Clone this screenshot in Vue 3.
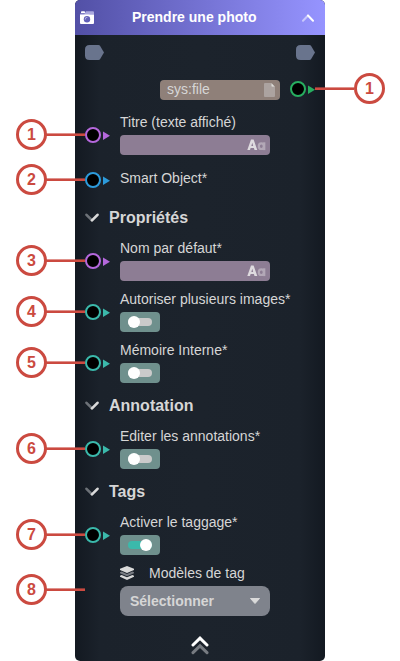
<script setup>
const groups = [
  {
    title: '',
    fields: [
      { label: 'Titre (texte affiché)', kind: 'text', color: '#b568dc', mark: 1 },
      { label: 'Smart Object*', kind: 'object', color: '#2d9bdb', mark: 2 },
    ],
  },
  {
    title: 'Propriétés',
    fields: [
      { label: 'Nom par défaut*', kind: 'text', color: '#b568dc', mark: 3 },
      { label: 'Autoriser plusieurs images*', kind: 'toggle', color: '#3bb9ab', mark: 4 },
      { label: 'Mémoire Interne*', kind: 'toggle', color: '#3bb9ab', mark: 5 },
    ],
  },
  {
    title: 'Annotation',
    fields: [{ label: 'Editer les annotations*', kind: 'toggle', color: '#3bb9ab', mark: 6 }],
  },
  {
    title: 'Tags',
    fields: [{ label: 'Activer le taggage*', kind: 'toggle', on: true, color: '#3bb9ab', mark: 7 }],
  },
]
</script>

<template>
  <main class="page">
    <article class="node">
      <header class="head">
        <svg class="camera" width="14" height="13" viewBox="0 0 14 13">
          <path d="M1 1.2Q1 .3 1.8.3H4.3Q5 .3 5 1.2V2H1Z" fill="#fff" />
          <path d="M0 4.5V3.4Q0 2.4 1 2.4H4.5L6 .3H13Q14 .3 14 1.3V4.5Z" fill="#aaa8de" />
          <path d="M0 3.8H4L5 3.4H9L10 3.8H14V12Q14 13 13 13H1Q0 13 0 12Z" fill="#fff" />
          <circle cx="7" cy="8.2" r="3.2" fill="#6260b8" />
          <path d="M5.2 8.6A2 2 0 0 1 7.4 6.4" fill="none" stroke="#b5b3e2" stroke-width="1" />
        </svg>
        <h1>Prendre une photo</h1>
        <svg class="fold" width="12" height="8" viewBox="0 0 12 8">
          <path d="M1 6.7L6 1.5" stroke="#c9c8fb" stroke-width="2" stroke-linecap="round" />
          <path d="M6 1.5L11 6.7" stroke="#fff" stroke-width="2" stroke-linecap="round" />
        </svg>
      </header>

      <div class="flow">
        <svg v-for="n in 2" :key="n" width="19" height="15" viewBox="0 0 19 15">
          <path d="M4.5 0H13.5Q14.5 0 15 .8L19 7.5L15 14.2Q14.5 15 13.5 15H4.5Q0 15 0 10.5V4.5Q0 0 4.5 0Z" fill="#69748d" />
        </svg>
      </div>

      <div class="output">
        <div class="file">
          <span>sys:file</span>
          <svg width="11" height="14" viewBox="0 0 11 14">
            <path d="M1 0H7V4H11V13Q11 14 10 14H1Q0 14 0 13V1Q0 0 1 0Z" fill="#aca3a0" />
            <path d="M7.3 0L11 3.7H7.3Z" fill="#deddda" />
          </svg>
        </div>
        <svg class="out-port" width="26" height="16" viewBox="0 0 26 16">
          <circle cx="8" cy="8" r="7" fill="#000" stroke="#27ae60" stroke-width="2" />
          <path d="M18 4.5L25 8.7L18 12.9Z" fill="#27ae60" />
        </svg>
        <div class="callout right"><i></i><b>1</b></div>
      </div>

      <section v-for="group in groups" :key="group.title">
        <h2 v-if="group.title">
          <svg width="14" height="9" viewBox="0 0 14 9">
            <path d="M1.5 1.8L6.8 7.2" stroke="#6d7278" stroke-width="2.6" stroke-linecap="round" />
            <path d="M7 7.4L12.5 1.8" stroke="#dadada" stroke-width="2.6" stroke-linecap="round" />
          </svg>
          {{ group.title }}
        </h2>
        <div v-for="field in group.fields" :key="field.mark" class="field" :class="field.kind">
          <svg class="port" width="25" height="16" viewBox="0 0 25 16">
            <circle cx="8" cy="8" r="7" fill="#000" :stroke="field.color" stroke-width="2" />
            <path d="M18 4.5L25 8.7L18 12.9Z" :fill="field.color" />
          </svg>
          <div class="body">
            <label>{{ field.label }}</label>
            <div v-if="field.kind === 'text'" class="input">
              <svg width="19" height="12" viewBox="0 0 19 12">
                <path fill-rule="evenodd" d="M.3 11L4 .5H6.6L10.3 11H7.5L6.9 9H3.6L3 11ZM4.3 6.9H6.2L5.3 3.8Z" fill="#dedbdf" />
                <ellipse cx="14.3" cy="7.2" rx="2.5" ry="2.8" fill="none" stroke="#b3a8b7" stroke-width="2.2" />
                <path d="M17.2 3.3V11.1" stroke="#b3a8b7" stroke-width="2.3" />
              </svg>
            </div>
            <div v-if="field.kind === 'toggle'" class="switch" :class="{ on: field.on }">
              <span><i></i></span>
            </div>
          </div>
          <div class="callout"><b>{{ field.mark }}</b><i></i></div>
        </div>
      </section>

      <div class="field models">
        <div class="body">
          <label>
            <svg width="14" height="14" viewBox="0 0 14 14">
              <path d="M0 9.8L1.6 9.1L7 11.3L12.4 9.1L14 9.8V10.8L7 14L0 10.8Z" fill="#dadada" />
              <path d="M0 6.3L1.6 5.6L7 8L12.4 5.6L14 6.3V7.3L7 10.3L0 7.3Z" fill="#777b82" />
              <path d="M7 0L14 2.8V4L7 7L0 4V2.8Z" fill="#dadada" />
            </svg>
            Modèles de tag
          </label>
          <div class="select">
            Sélectionner
            <svg width="10" height="6" viewBox="0 0 10 6">
              <path d="M.5 .5H9.5L5 5.5Z" fill="#dadada" stroke="#dadada" stroke-linejoin="round" />
            </svg>
          </div>
        </div>
        <div class="callout"><b>8</b><i></i></div>
      </div>

      <footer>
        <svg width="18" height="19" viewBox="0 0 18 19">
          <path d="M2 16.7L9 9.9L16 16.7" fill="none" stroke="#777b81" stroke-width="3" stroke-linecap="round" />
          <path d="M2 9L9 2.2L16 9" fill="none" stroke="#fff" stroke-width="3" stroke-linecap="round" />
        </svg>
      </footer>
    </article>
  </main>
</template>

<style>
body {
  margin: 0;
  background: #fff;
}
</style>

<style scoped>
* {
  box-sizing: border-box;
}
svg {
  display: block;
  flex: none;
}
.page {
  height: 661px;
  padding: 0 75px;
  font: 14px 'Liberation Sans', sans-serif;
  color: #d6d6d6;
}
.node {
  display: flex;
  flex-direction: column;
  height: 661px;
  border-radius: 5px;
  background: linear-gradient(90deg, #131921, #1b222b 10%, #1c232c 50%, #1b222b 90%, #131921);
}
.head {
  display: flex;
  align-items: center;
  height: 35px;
  padding: 0 11px 0 5px;
  border-radius: 5px 5px 0 0;
  background: linear-gradient(90deg, #5250a6, #9694ff);
}
h1 {
  flex: 1;
  margin: 0;
  padding-left: 38px;
  font-size: 14px;
  line-height: 35px;
  color: #fff;
}
.flow {
  display: flex;
  justify-content: space-between;
  height: 35px;
  padding: 10px;
}
.output {
  position: relative;
  display: flex;
  gap: 10px;
  height: 39px;
  padding: 10px 0 0 85px;
}
.file {
  display: flex;
  align-items: center;
  justify-content: space-between;
  width: 120px;
  height: 20px;
  padding: 0 5px 0 7px;
  border-radius: 4px;
  background: #8f8079;
  line-height: 18px;
}
.file span {
  height: 20px;
}
.out-port {
  margin-top: 1px;
}
h2 {
  display: flex;
  align-items: center;
  gap: 10px;
  height: 35px;
  margin: 0;
  padding-left: 10px;
  font-size: 16px;
}
.field {
  position: relative;
  display: flex;
  gap: 10px;
  height: 51px;
  padding-left: 10px;
}
.port {
  margin-top: 18px;
}
label {
  display: flex;
  align-items: center;
  height: 26px;
  white-space: nowrap;
}
.object {
  height: 40px;
}
.object .port {
  margin-top: 12px;
}
.object label {
  height: 36px;
}
.input {
  display: flex;
  align-items: center;
  justify-content: flex-end;
  width: 150px;
  height: 20px;
  padding-right: 4px;
  border-radius: 4px;
  background: #8d7d94;
}
.switch {
  display: flex;
  align-items: center;
  width: 40px;
  height: 20px;
  padding-left: 8px;
  border-radius: 4px;
  background: #6f908d;
}
.switch span {
  display: flex;
  align-items: center;
  width: 24px;
  height: 8px;
  border-radius: 4px;
  background: #cacaca;
}
.switch i {
  flex: none;
  width: 12px;
  height: 12px;
  border-radius: 50%;
  background: #fff;
}
.switch.on span {
  justify-content: flex-end;
  background: #3bb9ab;
}
.models {
  height: 56px;
  padding-left: 45px;
}
.models label {
  gap: 15px;
}
.select {
  display: flex;
  align-items: center;
  justify-content: space-between;
  width: 150px;
  height: 30px;
  padding: 0 10px;
  border-radius: 8px;
  background: #7f838c;
  font-weight: bold;
}
footer {
  display: flex;
  justify-content: center;
  padding-top: 20px;
}
.callout {
  position: absolute;
  top: 10px;
  left: -59px;
  display: flex;
  align-items: flex-start;
}
.object .callout {
  top: 4px;
}
.models .callout {
  top: 14px;
}
.callout.right {
  top: 3px;
  left: 240px;
}
.callout b {
  width: 31px;
  height: 31px;
  border: 3px solid #cb4a40;
  border-radius: 50%;
  background: #fff;
  color: #cb4a40;
  font-size: 16px;
  line-height: 26px;
  text-align: center;
}
.callout i {
  width: 39px;
  height: 3px;
  margin-top: 14px;
  background: linear-gradient(rgba(203, 74, 64, 0.6) 1px, #cb4a40 1px);
}
.callout:not(.right) i {
  margin-left: -1px;
}
</style>
